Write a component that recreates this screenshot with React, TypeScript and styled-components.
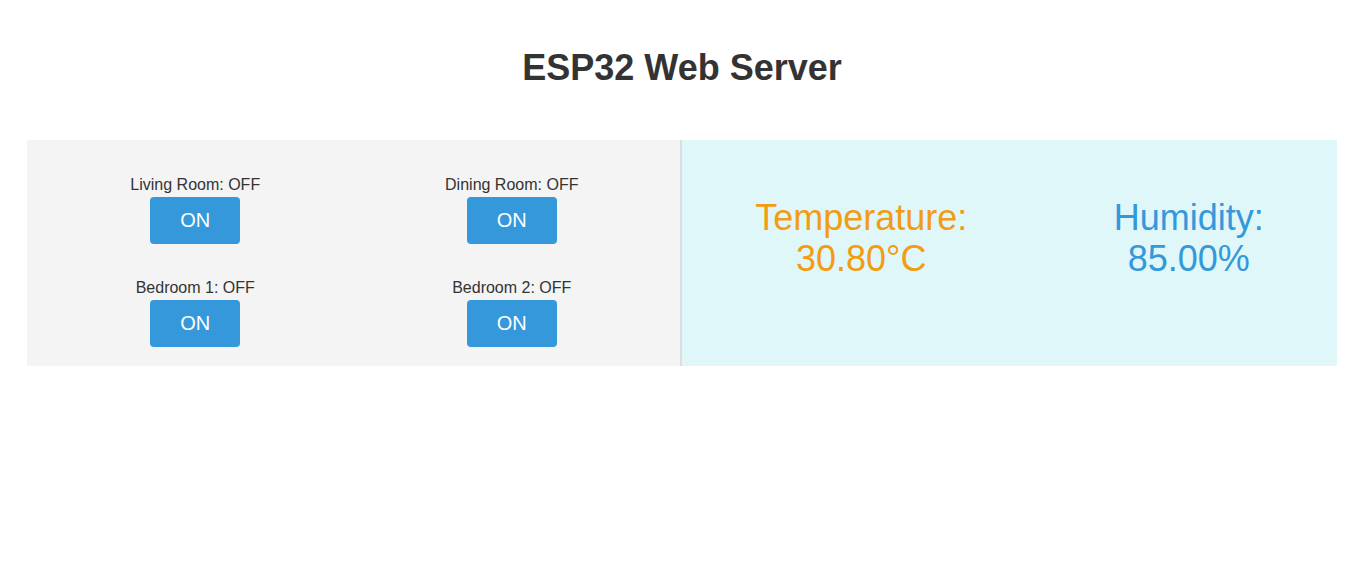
import React from "react";
import styled, { createGlobalStyle } from "styled-components";

const GlobalStyle = createGlobalStyle`
  body {
    margin: 0;
    background: #ffffff;
    font-family: "Liberation Sans", Arial, Helvetica, sans-serif;
    color: #333333;
  }
`;

const Page = styled.main`
  padding: 0 20px 0 27px;
`;

const Title = styled.h1`
  margin: 47px 0 51px;
  font-size: 36px;
  line-height: 42px;
  font-weight: bold;
  text-align: center;
  color: #333333;
`;

const Dashboard = styled.section`
  display: grid;
  grid-template-columns: 655px 1fr;
  height: 226px;
`;

const SwitchPanel = styled.div`
  display: grid;
  grid-template-columns: 1fr 1fr;
  row-gap: 35px;
  align-content: start;
  padding: 36px 10px 18px 10px;
  background: #f4f4f4;
  border-right: 2px solid #dcdcdc;
`;

const Switch = styled.div`
  display: flex;
  flex-direction: column;
  align-items: center;
  gap: 3px;
`;

const SwitchLabel = styled.span`
  font-size: 16px;
  line-height: 18px;
  color: #333333;
`;

const SwitchButton = styled.button`
  width: 90px;
  height: 47px;
  padding: 0;
  border: none;
  border-radius: 4px;
  background: #3498db;
  color: #ffffff;
  font-family: "Liberation Sans", Arial, sans-serif;
  font-size: 20px;
  cursor: pointer;
`;

const SensorPanel = styled.div`
  display: flex;
  justify-content: space-around;
  align-items: flex-start;
  padding-top: 57px;
  background: #e0f7fa;
`;

const Reading = styled.div<{ $color: string }>`
  font-size: 36px;
  line-height: 41px;
  text-align: center;
  color: ${(p) => p.$color};
`;

const rooms = ["Living Room", "Dining Room", "Bedroom 1", "Bedroom 2"];

const App = () => {
  return (
    <Page>
      <GlobalStyle />
      <Title>ESP32 Web Server</Title>
      <Dashboard>
        <SwitchPanel>
          {rooms.map((room) => (
            <Switch key={room}>
              <SwitchLabel>{room}: OFF</SwitchLabel>
              <SwitchButton>ON</SwitchButton>
            </Switch>
          ))}
        </SwitchPanel>
        <SensorPanel>
          <Reading $color="#f39c12">
            Temperature:
            <br />
            30.80°C
          </Reading>
          <Reading $color="#3498db">
            Humidity:
            <br />
            85.00%
          </Reading>
        </SensorPanel>
      </Dashboard>
    </Page>
  );
};

export default App;
